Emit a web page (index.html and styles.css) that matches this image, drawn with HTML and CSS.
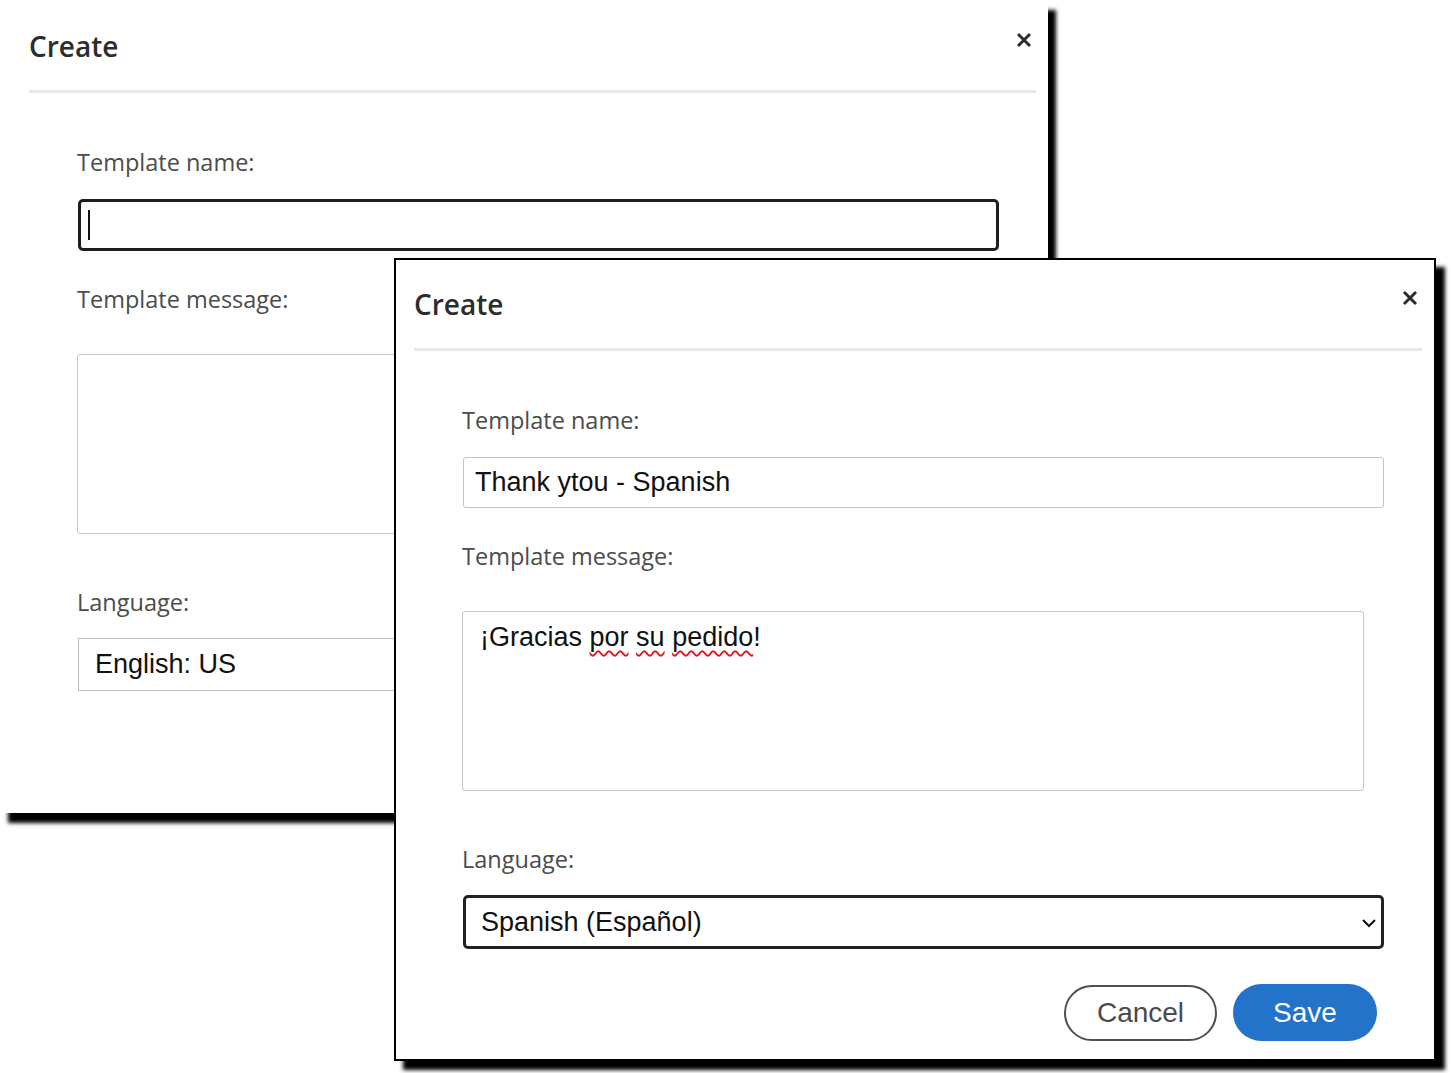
FILE: index.html
```html
<!DOCTYPE html>
<html lang="en">
<head>
<meta charset="utf-8">
<title>Create template</title>
<link rel="stylesheet" href="styles.css">
</head>
<body>
<div class="dialog dialog-back">
  <div class="dlg-header">
    <h2 class="dlg-title">Create</h2>
    <svg class="dlg-close" width="16" height="16" viewBox="0 0 16 16"><path d="M2 2 L14 14 M14 2 L2 14" stroke="#2d2d2d" stroke-width="3" fill="none"/></svg>
  </div>
  <div class="dlg-form">
    <div class="lbl lbl-first">Template name:</div>
    <div class="field field-focus"><span class="caret"></span></div>
    <div class="lbl lbl-msg">Template message:</div>
    <div class="area"></div>
    <div class="lbl lbl-lang">Language:</div>
    <div class="field select-plain">English: US</div>
  </div>
</div>

<div class="dialog dialog-front">
  <div class="dlg-header">
    <h2 class="dlg-title">Create</h2>
    <svg class="dlg-close" width="16" height="16" viewBox="0 0 16 16"><path d="M2 2 L14 14 M14 2 L2 14" stroke="#2d2d2d" stroke-width="3" fill="none"/></svg>
  </div>
  <div class="dlg-form">
    <div class="lbl lbl-first">Template name:</div>
    <div class="field">Thank ytou - Spanish</div>
    <div class="lbl lbl-msg">Template message:</div>
    <div class="area">¡Gracias <span class="spell">por</span> <span class="spell">su</span> <span class="spell">pedido</span>!</div>
    <div class="lbl lbl-lang">Language:</div>
    <div class="field select-focus">
      <span>Spanish (Español)</span>
      <svg class="chev" width="16" height="10" viewBox="0 0 16 10"><path d="M2 2 L8 8 L14 2" stroke="#111" stroke-width="2" fill="none"/></svg>
    </div>
    <div class="actions">
      <button class="btn btn-cancel">Cancel</button>
      <button class="btn btn-save">Save</button>
    </div>
  </div>
</div>
</body>
</html>
```
FILE: styles.css
```css
* { box-sizing: border-box; }

html, body {
  margin: 0;
  padding: 0;
  background: #fff;
}

body {
  position: relative;
  width: 1452px;
  height: 1073px;
  overflow: hidden;
  font-family: "Open Sans", "Liberation Sans", sans-serif;
}

.dialog {
  position: absolute;
  background: #fff;
  display: flex;
  flex-direction: column;
  overflow: hidden;
}

.dialog-back {
  left: 0;
  top: 0;
  width: 1048px;
  height: 813px;
  padding: 2px 0 0 11px;
  box-shadow: 8px 10px 4px #000;
  z-index: 1;
}

.dialog-front {
  left: 394px;
  top: 258px;
  width: 1042px;
  height: 803px;
  border: 2px solid #000;
  box-shadow: 9px 9px 4px #000;
  z-index: 2;
}

.dlg-header {
  display: flex;
  justify-content: space-between;
  align-items: flex-start;
  margin: 0 12px 0 18px;
  padding: 27px 4px 27px 0;
  border-bottom: 3px solid #e8e8e8;
}

.dlg-title {
  margin: 0;
  font-family: "Open Sans", sans-serif;
  font-weight: 600;
  font-size: 28px;
  line-height: 34px;
  color: #2c2c2c;
}

.dlg-close {
  display: block;
  margin-top: 3px;
}

.dlg-form {
  display: flex;
  flex-direction: column;
  align-items: flex-start;
  width: 988px;
  padding-left: 66px;
}

.lbl {
  font-family: "Open Sans", sans-serif;
  font-size: 23.5px;
  line-height: 28px;
  color: #4b4b4b;
}

.lbl-first { margin-top: 55px; }
.lbl-msg { margin-top: 34px; }
.lbl-lang { margin-top: 54px; }

.field {
  display: flex;
  align-items: center;
  width: 921px;
  height: 51px;
  margin: 23px 0 0 1px;
  padding: 0 11px;
  border: 1px solid #c4c4c4;
  border-radius: 3px;
  font-family: "Liberation Sans", Arial, sans-serif;
  font-size: 27px;
  line-height: 31px;
  color: #111;
  background: #fff;
}

.field-focus {
  height: 52px;
  border: 3px solid #1e1e1e;
  border-radius: 5px;
  padding-left: 7px;
}

.caret {
  display: block;
  width: 2px;
  height: 30px;
  background: #111;
}

.area {
  width: 902px;
  height: 180px;
  margin-top: 41px;
  padding: 10px 17px;
  border: 1px solid #c8c8c8;
  border-radius: 3px;
  font-family: "Liberation Sans", Arial, sans-serif;
  font-size: 27px;
  line-height: 31px;
  color: #111;
}

.spell {
  text-decoration: underline wavy #e0161b;
  text-decoration-thickness: 1.5px;
  text-underline-offset: 4px;
  text-decoration-skip-ink: none;
}

.select-plain {
  height: 53px;
  margin-top: 22px;
  padding-left: 16px;
  border: 1px solid #bdbdbd;
  border-radius: 0;
}

.select-focus {
  justify-content: space-between;
  height: 54px;
  margin-top: 22px;
  padding: 0 4px 0 15px;
  border: 3px solid #222;
  border-radius: 5px;
}

.chev { display: block; margin-top: 2px; }

.actions {
  display: flex;
  justify-content: flex-end;
  align-items: center;
  gap: 16px;
  width: 922px;
  margin-top: 35px;
  padding-right: 7px;
}

.btn {
  font-family: "Liberation Sans", Arial, sans-serif;
  font-size: 28px;
  border-radius: 29px;
  cursor: pointer;
  padding: 0;
}

.btn-cancel {
  width: 153px;
  height: 56px;
  border: 2px solid #505050;
  background: #fff;
  color: #4a4a4a;
}

.btn-save {
  width: 144px;
  height: 57px;
  border: none;
  background: #2473cb;
  color: #fff;
}
```
